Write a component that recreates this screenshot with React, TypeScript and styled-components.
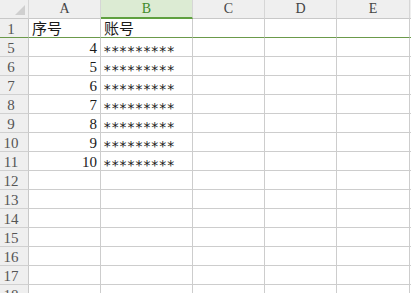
import React from 'react'
import styled, { createGlobalStyle } from 'styled-components'

const GlobalStyle = createGlobalStyle`
    html, body {
        margin: 0;
        padding: 0;
        background: #ffffff;
        overflow: hidden;
    }
`

const Sheet = styled.div`
    display: grid;
    grid-template-columns: 29px 72px 92px 72px 72px 73px 20px;
    grid-auto-rows: 19px;
    width: 411px;
    height: 293px;
    overflow: hidden;
    font-family: "Liberation Serif", "Noto Sans CJK SC", serif;
    font-size: 15px;
    color: #1a1a1a;
    background: #ffffff;
`

const Corner = styled.div`
    position: relative;
    background: #efefef;
    border-right: 1px solid #d6d6d6;
    border-bottom: 1px solid #c8c8c8;
`

const CornerMark = styled.div`
    position: absolute;
    right: 3px;
    bottom: 3px;
    width: 0;
    height: 0;
    border-left: 10px solid transparent;
    border-bottom: 10px solid #cfcfcf;
`

const ColHead = styled.div<{ $active?: boolean }>`
    display: flex;
    align-items: center;
    justify-content: center;
    background: ${p => (p.$active ? '#dcebd3' : '#efefef')};
    color: ${p => (p.$active ? '#3f8a2a' : '#444')};
    border-right: 1px solid #d6d6d6;
    border-bottom: ${p => (p.$active ? '2px solid #5fa03f' : '1px solid #c8c8c8')};
    font-size: 14px;
    line-height: 1;
    box-sizing: border-box;
    padding-top: ${p => (p.$active ? '1px' : '0')};
`

const RowHead = styled.div<{ $frozen?: boolean }>`
    display: flex;
    align-items: center;
    justify-content: center;
    padding-right: 6px;
    background: #efefef;
    color: #555;
    border-right: 1px solid #c8c8c8;
    border-bottom: 1px solid ${p => (p.$frozen ? '#6b9a4a' : '#d0d0d0')};
    box-sizing: border-box;
    padding-top: 2px;
`

const Cell = styled.div<{ $frozen?: boolean; $num?: boolean; $mask?: boolean }>`
    display: flex;
    align-items: center;
    justify-content: ${p => (p.$num ? 'flex-end' : 'flex-start')};
    padding: ${p => (p.$mask ? '7px 2px 0 2px' : '2px 3px 0 3px')};
    border-right: 1px solid #cdcdcd;
    border-bottom: 1px solid ${p => (p.$frozen ? '#6b9a4a' : '#cdcdcd')};
    box-sizing: border-box;
    white-space: nowrap;
    overflow: hidden;
    line-height: 1;
    font-family: ${p => (p.$mask ? '"DejaVu Sans Mono", monospace' : 'inherit')};
    font-size: ${p => (p.$mask ? '14px' : '15px')};
    letter-spacing: ${p => (p.$mask ? '-0.5px' : '0')};
`

const cols = ['A', 'B', 'C', 'D', 'E', '']

type Row = { label: string; a?: string; b?: string; frozen?: boolean }

const rows: Row[] = [
    { label: '1', a: '序号', b: '账号', frozen: true },
    ...[5, 6, 7, 8, 9, 10, 11].map(n => ({ label: String(n), a: String(n - 1), b: '*********' })),
    ...[12, 13, 14, 15, 16, 17, 18].map(n => ({ label: String(n) })),
]

export default function App() {
    return (
        <>
            <GlobalStyle />
            <Sheet>
                <Corner>
                    <CornerMark />
                </Corner>
                {cols.map((c, i) => (
                    <ColHead key={i} $active={c === 'B'}>{c}</ColHead>
                ))}

                {rows.map(r => (
                    <React.Fragment key={r.label}>
                        <RowHead $frozen={r.frozen}>{r.label}</RowHead>
                        <Cell $frozen={r.frozen} $num={!r.frozen && !!r.a}>{r.a}</Cell>
                        <Cell $frozen={r.frozen} $mask={!r.frozen && !!r.b}>{r.b}</Cell>
                        <Cell $frozen={r.frozen} />
                        <Cell $frozen={r.frozen} />
                        <Cell $frozen={r.frozen} />
                        <Cell $frozen={r.frozen} />
                    </React.Fragment>
                ))}
            </Sheet>
        </>
    )
}
